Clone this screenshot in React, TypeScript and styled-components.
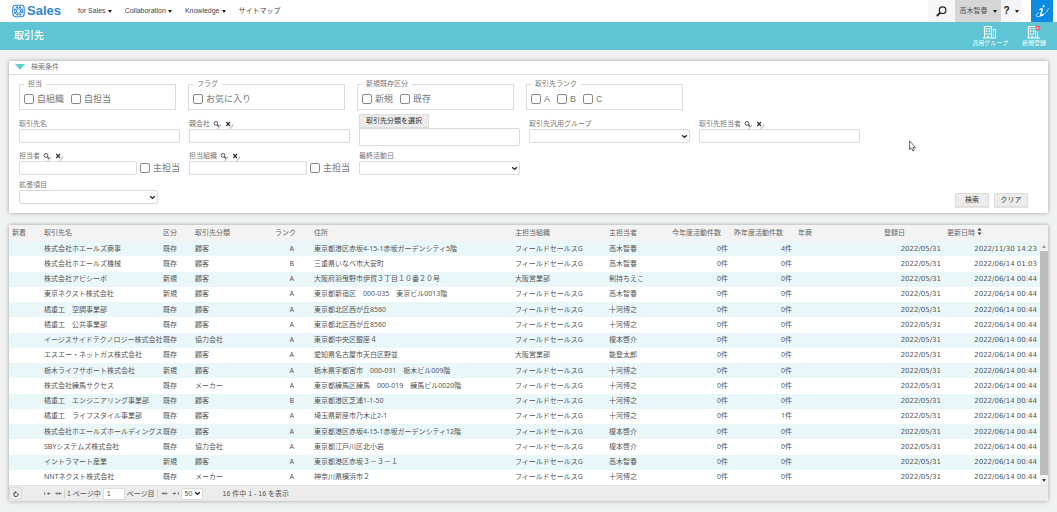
import React from 'react';
import styled, { createGlobalStyle } from 'styled-components';

const sans = `"Liberation Sans", "Noto Sans CJK JP", sans-serif`;
const meiryo = `"Noto Sans", "Noto Sans CJK JP", sans-serif`;

const GlobalStyle = createGlobalStyle`
  * { box-sizing: border-box; }
  body { margin: 0; background: #f0f1f1; color: #555; font: 7px/10px ${sans}; }
  button, input, select { font: inherit; color: inherit; margin: 0; }
  button { cursor: pointer; }
`;

const TopBar = styled.header`
  display: flex;
  height: 22px;
  background: #fff;
  padding: 0 4px 0 12px;
`;

const Logo = styled.a`
  display: flex;
  align-items: center;
  gap: 2px;
  width: 66px;
  color: #2b86d3;
  font-size: 13px;
  font-weight: bold;
  text-decoration: none;
`;

const Nav = styled.nav`
  display: flex;
  align-items: center;
  gap: 13px;
  flex: 1;
`;

const NavLink = styled.a`
  display: flex;
  align-items: center;
  gap: 2px;
  color: #444;
  text-decoration: none;
  white-space: nowrap;
`;

const Caret = styled.span`
  border: 2px solid transparent;
  border-top: 3px solid #222;
  border-bottom: 0;
`;

const TopButton = styled.button<{ $w: number; $bg: string }>`
  display: flex;
  align-items: center;
  justify-content: center;
  gap: 5px;
  width: ${p => p.$w}px;
  border: 0;
  padding: 0;
  background: ${p => p.$bg};
`;

const HelpMark = styled.b`
  font-size: 10px;
  color: #222;
`;

const InfoButton = styled(TopButton)`
  margin-left: 10px;
`;

const TitleBar = styled.div`
  display: flex;
  align-items: center;
  justify-content: space-between;
  height: 28px;
  padding: 0 11px 0 14px;
  background: #5fc4d3;
  color: #fff;
`;

const Title = styled.h1`
  margin: 0;
  font-size: 10px;
  font-weight: 500;
`;

const TitleActions = styled.div`
  display: flex;
  gap: 14px;
`;

const TitleAction = styled.button`
  display: flex;
  flex-direction: column;
  align-items: center;
  border: 0;
  padding: 0;
  background: none;
  color: #fff;
  font-size: 6px;
  line-height: 8px;
`;

const Main = styled.main`
  display: flex;
  flex-direction: column;
  gap: 12px;
  padding: 11px 9px;
`;

const Panel = styled.section`
  background: #fff;
  box-shadow: 0 0 4px rgba(0, 0, 0, 0.35);
`;

const PanelHeader = styled.h2`
  display: flex;
  align-items: center;
  gap: 6px;
  height: 14px;
  margin: 0;
  padding: 0 6px 2px;
  border-bottom: 1px solid #ddd;
  color: #777;
  font-size: 7px;
  font-weight: normal;
`;

const SearchForm = styled.form`
  padding: 5px 20px 6px 10px;
`;

const Groups = styled.div`
  display: flex;
  gap: 12px;
  margin-bottom: 4px;
`;

const Group = styled.fieldset`
  display: flex;
  align-items: center;
  gap: 7px;
  width: 157px;
  height: 30px;
  margin: 0;
  padding: 0 4px;
  border: 1px solid #ddd;
`;

const Legend = styled.legend`
  padding: 0 4px;
  color: #777;
  line-height: 8px;
`;

const CheckLabel = styled.label`
  display: flex;
  align-items: center;
  gap: 3px;
  color: #777;
  font-size: 9px;
  line-height: 12px;
  white-space: nowrap;
`;

const Check = styled.input.attrs({ type: 'checkbox' })`
  appearance: none;
  width: 10px;
  height: 10px;
  border: 1px solid #888;
  border-radius: 2px;
  background: #fff;
  &:checked { background: #5fc4d3; }
`;

const FormBody = styled.div`
  display: flex;
  align-items: flex-end;
  justify-content: space-between;
`;

const Fields = styled.div`
  display: grid;
  grid-template-columns: repeat(5, 161px);
  gap: 5px 9px;
  align-items: end;
  margin-bottom: 3px;
`;

const Field = styled.div<{ $raised?: boolean; $w?: number }>`
  width: ${p => (p.$w ? p.$w + 'px' : '100%')};
  padding-bottom: ${p => (p.$raised ? 3 : 0)}px;
`;

const FieldLabel = styled.div`
  display: flex;
  align-items: center;
  gap: 2px;
  height: 10px;
  color: #777;
`;

const LookupButton = styled.button`
  display: flex;
  border: 0;
  padding: 0 1px;
  background: none;
`;

const ControlRow = styled.div`
  display: flex;
  align-items: center;
  gap: 3px;
`;

const TextBox = styled.input<{ $tall?: boolean }>`
  display: block;
  flex: 1;
  width: 100%;
  min-width: 0;
  height: ${p => (p.$tall ? 18 : 14)}px;
  border: 1px solid #dadada;
  border-radius: 2px;
  padding: 0 4px;
  background: #fff;
`;

const SelectWrap = styled.div`
  display: grid;
  align-items: center;
  svg { grid-area: 1 / 1; justify-self: end; margin-right: 2px; pointer-events: none; }
`;

const SelectBox = styled.select<{ $h: number }>`
  appearance: none;
  grid-area: 1 / 1;
  width: 100%;
  height: ${p => p.$h}px;
  border: 1px solid #dadada;
  border-radius: 2px;
  padding: 0 3px;
  background: #fff;
`;

const GreyButton = styled.button<{ $w: number }>`
  display: block;
  width: ${p => p.$w}px;
  height: 14px;
  border: 1px solid #ddd;
  border-radius: 1px;
  padding: 0;
  background: #ececec;
  color: #333;
  white-space: nowrap;
  box-shadow: 0 1px 1px rgba(0, 0, 0, 0.12);
`;

const Actions = styled.div`
  display: flex;
  gap: 5px;
`;

const GridBody = styled.div`
  display: flex;
`;

const Table = styled.table`
  flex: 1;
  width: 0;
  height: 260px;
  table-layout: fixed;
  border-collapse: collapse;
  font-family: ${meiryo};
  white-space: nowrap;
  tbody tr:nth-child(odd) { background: #eaf7f9; }
`;

type Align = 'left' | 'right';

const Th = styled.th<{ $align?: Align; $pad?: number }>`
  height: 16px;
  padding: 0 ${p => p.$pad ?? 3}px 0 3px;
  background: #f3f3f3;
  color: #666;
  font-weight: normal;
  text-align: ${p => p.$align ?? 'left'};
`;

const Td = styled.td<{ $align?: Align; $pad?: number; $wide?: boolean }>`
  padding: 0 ${p => p.$pad ?? 3}px 0 3px;
  text-align: ${p => p.$align ?? 'left'};
  font-family: ${p => (p.$wide ? '"DejaVu Sans", sans-serif' : 'inherit')};
`;

const ScrollRail = styled.div`
  display: flex;
  flex-direction: column;
  width: 8px;
  border-top: 16px solid #f3f3f3;
  background: #f1f1f1;
`;

const ScrollArrow = styled.span<{ $down?: boolean }>`
  display: flex;
  align-items: center;
  justify-content: center;
  height: 10px;
  svg { transform: ${p => (p.$down ? 'none' : 'rotate(180deg)')}; }
`;

const ScrollThumb = styled.span`
  flex: 1;
  background: #bcbcbc;
`;

const Pager = styled.footer`
  display: flex;
  align-items: center;
  height: 16px;
  background: #ececec;
  border-top: 1px solid #e2e2e2;
  white-space: nowrap;
`;

const PagerButton = styled.button<{ $boxed?: boolean }>`
  display: flex;
  align-items: center;
  justify-content: center;
  width: ${p => (p.$boxed ? 13 : 11)}px;
  height: 13px;
  padding: 0;
  border: ${p => (p.$boxed ? '1px solid #ddd' : '0')};
  background: none;
`;

const PagerGroup = styled.div<{ $gap?: number; $ml?: number }>`
  display: flex;
  align-items: center;
  gap: ${p => p.$gap ?? 0}px;
  margin-left: ${p => p.$ml ?? 0}px;
`;

const Divider = styled.span`
  width: 1px;
  height: 9px;
  background: #d4d4d4;
`;

const PageInput = styled.input`
  width: 22px;
  height: 12px;
  border: 1px solid #ddd;
  padding: 0 3px;
  background: #fff;
`;

const PageSize = styled.div`
  width: 22px;
`;

const Pointer = styled.svg`
  position: absolute;
  left: 86%;
  top: 140px;
`;

const Chevron = () => (
  <svg width="7" height="5" viewBox="0 0 7 5">
    <path d="M1.2 1.2 3.5 3.4 5.8 1.2" fill="none" stroke="#222" strokeWidth="1.4" />
  </svg>
);

const SearchGlyph = () => (
  <svg width="8" height="9" viewBox="0 0 8 9">
    <circle cx="3" cy="3.4" r="1.9" fill="none" stroke="#555" strokeWidth="1" />
    <path d="M4.4 4.8 6 6.5" stroke="#444" strokeWidth="1.2" />
    <path d="M7.5 4.5C7.5 6.5 6.5 8 4.5 8.2" fill="none" stroke="#999" strokeWidth="0.8" />
  </svg>
);

const ClearGlyph = () => (
  <svg width="8" height="9" viewBox="0 0 8 9">
    <path d="M1.3 2 5 6M5 2 1.3 6" stroke="#333" strokeWidth="1.2" />
    <path d="M7.5 4.5C7.5 6.5 6.5 8 4.5 8.2" fill="none" stroke="#999" strokeWidth="0.8" />
  </svg>
);

const Building = ({ badge }: { badge?: boolean }) => (
  <svg width="14" height="14" viewBox="0 0 14 13" fill="none" stroke="#fff">
    <path d="M1.5 12.5V1h7v11.5M0 12.5h13" strokeWidth="1.2" />
    <path d="M3.6 2.5v7M6.4 2.5v7" strokeWidth="1.5" strokeDasharray="1.6 0.9" />
    <path d="M5 12.5V10" strokeWidth="1.6" />
    {badge ? (
      <>
        <path d="M10.5 6v6.5" />
        <rect x="8.3" y="0.3" width="4.4" height="4.4" rx="1" fill="#f0505a" stroke="none" />
        <path d="M10.5 1.3v2.4M9.3 2.5h2.4" strokeWidth="0.7" />
      </>
    ) : (
      <>
        <path d="M10 4h2.5v8.5" strokeWidth="0.9" />
        <path d="M10.5 5v6" strokeDasharray="1.2 1" strokeWidth="0.9" />
      </>
    )}
  </svg>
);

const PageArrow = ({ flip, bar }: { flip?: boolean; bar?: boolean }) => (
  <svg width="7" height="5" viewBox="0 0 7 5">
    <g transform={flip ? 'translate(7 0) scale(-1 1)' : undefined} fill="#777">
      {bar ? <path d="M0.3 1h0.9v3H0.3z" /> : <path d="M0 2.5 2.6 1v3z" />}
      <path d="M2.6 2.5 5 1v1.1h1.6v0.8H5V4z" />
    </g>
  </svg>
);

function Dropdown({ label, options = [''], h = 14 }: { label: string; options?: string[]; h?: number }) {
  return (
    <SelectWrap>
      <SelectBox aria-label={label} $h={h}>
        {options.map(o => <option key={o}>{o}</option>)}
      </SelectBox>
      <Chevron />
    </SelectWrap>
  );
}

function SelectField({ label, raised, w }: { label: string; raised?: boolean; w?: number }) {
  return (
    <Field $raised={raised} $w={w}>
      <FieldLabel>{label}</FieldLabel>
      <Dropdown label={label} />
    </Field>
  );
}

function LabelRow({ id, text, lookup }: { id: string; text: string; lookup?: boolean }) {
  return (
    <FieldLabel>
      <label htmlFor={id}>{text}</label>
      {lookup && (
        <>
          <LookupButton type="button" aria-label={`${text}を検索`}><SearchGlyph /></LookupButton>
          <LookupButton type="button" aria-label={`${text}をクリア`}><ClearGlyph /></LookupButton>
        </>
      )}
    </FieldLabel>
  );
}

const groups = [
  { legend: '担当', items: ['自組織', '自担当'] },
  { legend: 'フラグ', items: ['お気に入り'] },
  { legend: '新規既存区分', items: ['新規', '既存'] },
  { legend: '取引先ランク', items: ['A', 'B', 'C'] },
];

const FSG = 'フィールドセールスG';
const OSAKA = '大阪営業部';

// name, status, category, rank, address, department, owner, last year's activity count, updated
const rows: string[][] = [
  ['株式会社ホエールズ商事', '既存', '顧客', 'A', '東京都港区赤坂4-15-1赤坂ガーデンシティ5階', FSG, '高木智春', '4件', '2022/11/30 14:23'],
  ['株式会社ホエールズ機械', '既存', '顧客', 'B', '三重県いなべ市大安町', FSG, '高木智春', '0件', '2022/06/14 01:03'],
  ['株式会社アビシーボ', '新規', '顧客', 'A', '大阪府羽曳野市伊賀３丁目１０番２０号', OSAKA, '剣持ちえこ', '0件', '2022/06/14 00:44'],
  ['東京ネクスト株式会社', '新規', '顧客', 'A', '東京都新宿区　000-035　東京ビル0013階', FSG, '高木智春', '0件', '2022/06/14 00:44'],
  ['橘重工　空調事業部', '既存', '顧客', 'A', '東京都北区西が丘8560', FSG, '十河博之', '0件', '2022/06/14 00:44'],
  ['橘重工　公共事業部', '既存', '顧客', 'A', '東京都北区西が丘8560', FSG, '十河博之', '0件', '2022/06/14 00:44'],
  ['イージスサイドテクノロジー株式会社', '既存', '協力会社', 'A', '東京都中央区銀座４', FSG, '榎本啓介', '0件', '2022/06/14 00:44'],
  ['エスエー・ネットガス株式会社', '既存', '顧客', 'A', '愛知県名古屋市天白区野並', OSAKA, '能登太郎', '0件', '2022/06/14 00:44'],
  ['栃木ライフサポート株式会社', '新規', '顧客', 'A', '栃木県宇都宮市　000-031　栃木ビル009階', FSG, '十河博之', '0件', '2022/06/14 00:44'],
  ['株式会社練馬サクセス', '既存', 'メーカー', 'A', '東京都練馬区練馬　000-019　練馬ビル0020階', FSG, '十河博之', '0件', '2022/06/14 00:44'],
  ['橘重工　エンジニアリング事業部', '既存', '顧客', 'B', '東京都港区芝浦1-1-50', FSG, '十河博之', '0件', '2022/06/14 00:44'],
  ['橘重工　ライフスタイル事業部', '既存', '顧客', 'A', '埼玉県新座市乃木止2-1', FSG, '十河博之', '1件', '2022/06/14 00:44'],
  ['株式会社ホエールズホールディングス', '既存', '顧客', 'A', '東京都港区赤坂4-15-1赤坂ガーデンシティ12階', FSG, '榎本啓介', '0件', '2022/06/14 00:44'],
  ['SBYシステムズ株式会社', '既存', '協力会社', 'A', '東京都江戸川区北小岩', FSG, '榎本啓介', '0件', '2022/06/14 00:44'],
  ['イントラマート産業', '新規', '顧客', 'A', '東京都港区赤坂３－３－１', FSG, '高木智春', '0件', '2022/06/14 00:44'],
  ['NNTネクスト株式会社', '既存', 'メーカー', 'A', '神奈川県横浜市２', FSG, '十河博之', '0件', '2022/06/14 00:44'],
];

const columnWidths = [32, 119, 32, 80, 39, 0, 94, 63, 62, 64, 86, 63, 96];

export default function App() {
  return (
    <>
      <GlobalStyle />
      <TopBar>
        <Logo href="#">
          <svg width="13" height="14" viewBox="0 0 13 14" fill="none" stroke="#2b86d3">
            <rect x="0.8" y="1.3" width="11.4" height="11.4" rx="3" strokeWidth="1.1" />
            <circle cx="6.5" cy="7" r="3.9" strokeWidth="1.8" strokeDasharray="2.1 0.96" />
            <circle cx="6.5" cy="7" r="2.2" strokeWidth="1" />
          </svg>
          Sales
        </Logo>
        <Nav>
          <NavLink href="#">for Sales <Caret /></NavLink>
          <NavLink href="#">Collaboration <Caret /></NavLink>
          <NavLink href="#">Knowledge <Caret /></NavLink>
          <NavLink href="#">サイトマップ</NavLink>
        </Nav>
        <TopButton $w={27} $bg="#f6f6f6" aria-label="検索">
          <svg width="11" height="11" viewBox="0 0 11 11" fill="none" stroke="#222">
            <circle cx="6.6" cy="4.2" r="3.3" strokeWidth="1.2" />
            <path d="M4.2 6.6 0.9 10" strokeWidth="1.8" />
          </svg>
        </TopButton>
        <TopButton $w={46} $bg="#d6d6d6">高木智春 <Caret /></TopButton>
        <TopButton $w={20} $bg="#f6f6f6" aria-label="ヘルプ"><HelpMark>?</HelpMark><Caret /></TopButton>
        <InfoButton $w={22} $bg="#0c8be0" aria-label="情報">
          <svg width="16" height="16" viewBox="0 0 16 16" fill="none" stroke="#fff" strokeLinecap="round">
            <path d="M6 6.5c1.2-.8 2.6-1 2.2.4L6.7 11.4c-.4 1.5 1.2 1.3 2.6.2" strokeWidth="1.5" />
            <circle cx="9.5" cy="3.2" r="0.7" fill="#fff" strokeWidth="0.8" />
            <path d="M4.5 9.5C1.5 12 1.5 14 4.5 13.5 8.5 13 14 9 14.3 5.5" strokeWidth="0.7" />
          </svg>
        </InfoButton>
      </TopBar>
      <TitleBar>
        <Title>取引先</Title>
        <TitleActions>
          <TitleAction><Building />汎用グループ</TitleAction>
          <TitleAction><Building badge />新規登録</TitleAction>
        </TitleActions>
      </TitleBar>
      <Main>
        <Panel>
          <PanelHeader>
            <svg width="10" height="6" viewBox="0 0 10 6"><path d="M0 0h10L5 6z" fill="#5fd0cf" /></svg>
            検索条件
          </PanelHeader>
          <SearchForm>
            <Groups>
              {groups.map(g => (
                <Group key={g.legend}>
                  <Legend>{g.legend}</Legend>
                  {g.items.map(item => (
                    <CheckLabel key={item}><Check />{item}</CheckLabel>
                  ))}
                </Group>
              ))}
            </Groups>
            <FormBody>
              <Fields>
                <Field $raised>
                  <LabelRow id="name" text="取引先名" />
                  <TextBox id="name" />
                </Field>
                <Field $raised>
                  <LabelRow id="parent" text="親会社" lookup />
                  <TextBox id="parent" />
                </Field>
                <Field>
                  <GreyButton type="button" $w={70}>取引先分類を選択</GreyButton>
                  <TextBox $tall aria-label="取引先分類" />
                </Field>
                <SelectField raised label="取引先汎用グループ" />
                <Field $raised>
                  <LabelRow id="contact" text="取引先担当者" lookup />
                  <TextBox id="contact" />
                </Field>
                <Field>
                  <LabelRow id="owner" text="担当者" lookup />
                  <ControlRow>
                    <TextBox id="owner" />
                    <CheckLabel><Check />主担当</CheckLabel>
                  </ControlRow>
                </Field>
                <Field>
                  <LabelRow id="dept" text="担当組織" lookup />
                  <ControlRow>
                    <TextBox id="dept" />
                    <CheckLabel><Check />主担当</CheckLabel>
                  </ControlRow>
                </Field>
                <SelectField label="最終活動日" />
                <span />
                <span />
                <SelectField label="拡張項目" w={139} />
              </Fields>
              <Actions>
                <GreyButton type="button" $w={34}>検索</GreyButton>
                <GreyButton type="button" $w={34}>クリア</GreyButton>
              </Actions>
            </FormBody>
          </SearchForm>
        </Panel>
        <Panel>
          <GridBody>
            <Table>
              <colgroup>
                {columnWidths.map((w, i) => <col key={i} width={w || undefined} />)}
              </colgroup>
              <thead>
                <tr>
                  <Th>新着</Th>
                  <Th>取引先名</Th>
                  <Th>区分</Th>
                  <Th>取引先分類</Th>
                  <Th $align="right" $pad={17}>ランク</Th>
                  <Th>住所</Th>
                  <Th>主担当組織</Th>
                  <Th>主担当者</Th>
                  <Th>今年度活動件数</Th>
                  <Th>昨年度活動件数</Th>
                  <Th>年商</Th>
                  <Th>登録日</Th>
                  <Th>
                    更新日時{' '}
                    <svg width="5" height="7" viewBox="0 0 5 7"><path d="M0.5 2.5h4L2.5 0zM0.5 4.5h4L2.5 7z" fill="#333" /></svg>
                  </Th>
                </tr>
              </thead>
              <tbody>
                {rows.map(([name, status, category, rank, address, dept, owner, last, updated]) => (
                  <tr key={name}>
                    <Td />
                    <Td>{name}</Td>
                    <Td>{status}</Td>
                    <Td>{category}</Td>
                    <Td $align="right" $pad={17}>{rank}</Td>
                    <Td>{address}</Td>
                    <Td>{dept}</Td>
                    <Td>{owner}</Td>
                    <Td $align="right">0件</Td>
                    <Td $align="right">{last}</Td>
                    <Td />
                    <Td $align="right" $wide>2022/05/31</Td>
                    <Td $align="right" $wide>{updated}</Td>
                  </tr>
                ))}
              </tbody>
            </Table>
            <ScrollRail>
              <ScrollArrow><svg width="4" height="3" viewBox="0 0 4 3"><path d="M0 0h4L2 3z" fill="#999" /></svg></ScrollArrow>
              <ScrollThumb />
              <ScrollArrow $down><svg width="4" height="3" viewBox="0 0 4 3"><path d="M0 0h4L2 3z" fill="#444" /></svg></ScrollArrow>
            </ScrollRail>
          </GridBody>
          <Pager>
            <PagerButton $boxed aria-label="更新">
              <svg width="6" height="6" viewBox="0 0 6 6" fill="none" stroke="#444">
                <path d="M4.8 2.2A2.2 2.2 0 1 1 2.6 1.2" /><path d="M2.2 0 4 1.2 2.4 2.6z" fill="#444" stroke="none" />
              </svg>
            </PagerButton>
            <PagerGroup $ml={20}>
              <PagerButton aria-label="最初のページ"><PageArrow bar /></PagerButton>
              <PagerButton aria-label="前のページ"><PageArrow /></PagerButton>
            </PagerGroup>
            <PagerGroup $gap={2}>
              <Divider />
              <label htmlFor="page">1 ページ中</label>
              <PageInput id="page" defaultValue="1" />
              <span>ページ目</span>
              <Divider />
            </PagerGroup>
            <PagerGroup $ml={1}>
              <PagerButton aria-label="次のページ"><PageArrow flip /></PagerButton>
              <PagerButton aria-label="最後のページ"><PageArrow flip bar /></PagerButton>
              <PageSize><Dropdown label="表示件数" options={['50', '100']} h={12} /></PageSize>
            </PagerGroup>
            <PagerGroup $ml={20}>16 件中 1 - 16 を表示</PagerGroup>
          </Pager>
        </Panel>
      </Main>
      <Pointer width="7" height="12" viewBox="0 0 7 12">
        <path d="M0.6 0.8v9L2.6 8l1.3 3 1.3-.6L4 7.5h2.5z" fill="#fff" stroke="#555" strokeWidth="0.9" />
      </Pointer>
    </>
  );
}
